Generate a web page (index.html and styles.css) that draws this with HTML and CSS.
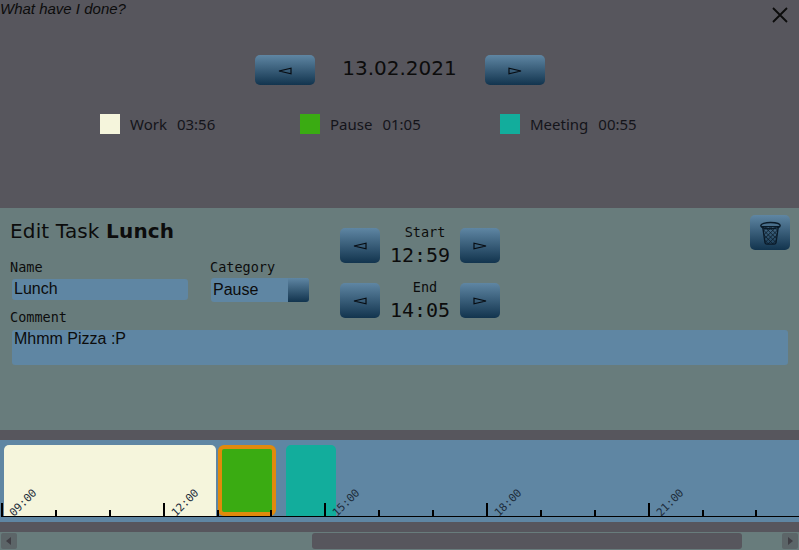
FILE: index.html
```html
<!DOCTYPE html>
<html>
  <head>
    <title>What have I done?</title>
    <link rel="stylesheet" href="styles.css">
  </head>
  <body>
    <div class="overview">
      <div class="app-title">What have I done?</div>
      <button class="close" aria-label="Close">
        <svg width="16" height="16" viewBox="0 0 16 16"><path d="M1 1L15 15M15 1L1 15" stroke="#0c0c0c" stroke-width="1.8" fill="none"/></svg>
      </button>
      <div class="date-row">
        <button class="btn btn-wide" aria-label="Previous day">
          <svg width="14" height="8" viewBox="0 0 14 8"><path d="M1 4L13 1.2V6.8Z" fill="none" stroke="#070c12" stroke-width="1.2"/></svg>
        </button>
        <div class="date">13.02.2021</div>
        <button class="btn btn-wide" aria-label="Next day">
          <svg width="14" height="8" viewBox="0 0 14 8"><path d="M13 4L1 1.2V6.8Z" fill="none" stroke="#070c12" stroke-width="1.2"/></svg>
        </button>
      </div>
      <div class="legend">
        <div class="legend-item"><span class="swatch work"></span><span>Work</span><span>03:56</span></div>
        <div class="legend-item"><span class="swatch pause"></span><span>Pause</span><span>01:05</span></div>
        <div class="legend-item"><span class="swatch meeting"></span><span>Meeting</span><span>00:55</span></div>
      </div>
    </div>

    <div class="editor">
      <div class="editor-left">
        <h2>Edit Task <b>Lunch</b></h2>
        <div class="fields">
          <div class="field name-field">
            <label for="name">Name</label>
            <input type="text" id="name" value="Lunch">
          </div>
          <div class="field">
            <label>Category</label>
            <div class="select"><span>Pause</span><i></i></div>
          </div>
        </div>
      </div>
      <div class="times">
        <div class="time-row">
          <button class="btn" aria-label="Start earlier">
            <svg width="14" height="8" viewBox="0 0 14 8"><path d="M1 4L13 1.2V6.8Z" fill="none" stroke="#070c12" stroke-width="1.2"/></svg>
          </button>
          <div class="time"><span>Start</span><strong>12:59</strong></div>
          <button class="btn" aria-label="Start later">
            <svg width="14" height="8" viewBox="0 0 14 8"><path d="M13 4L1 1.2V6.8Z" fill="none" stroke="#070c12" stroke-width="1.2"/></svg>
          </button>
        </div>
        <div class="time-row">
          <button class="btn" aria-label="End earlier">
            <svg width="14" height="8" viewBox="0 0 14 8"><path d="M1 4L13 1.2V6.8Z" fill="none" stroke="#070c12" stroke-width="1.2"/></svg>
          </button>
          <div class="time"><span>End</span><strong>14:05</strong></div>
          <button class="btn" aria-label="End later">
            <svg width="14" height="8" viewBox="0 0 14 8"><path d="M13 4L1 1.2V6.8Z" fill="none" stroke="#070c12" stroke-width="1.2"/></svg>
          </button>
        </div>
      </div>
      <button class="btn trash" aria-label="Delete">
        <svg width="23" height="24" viewBox="0 0 24 26">
          <defs>
            <pattern id="mesh" width="3.4" height="3.4" patternUnits="userSpaceOnUse" patternTransform="rotate(45)">
              <path d="M0 0H3.4M0 0V3.4" stroke="#0a1a28" stroke-width="1.3"/>
            </pattern>
          </defs>
          <path d="M3.5 6L6 23.5Q6.5 25 8 25H16Q17.5 25 18 23.5L20.5 6Z" fill="url(#mesh)" stroke="#0a1a28" stroke-width="1.4"/>
          <ellipse cx="12" cy="5" rx="10.5" ry="3.4" fill="none" stroke="#0a1a28" stroke-width="1.5"/>
        </svg>
      </button>
      <div class="comment-field">
        <label for="comment">Comment</label>
        <textarea id="comment">Mhmm Pizza :P</textarea>
      </div>
    </div>

    <div class="timeline">
      <div class="task work" style="left: 4px; width: 212px"></div>
      <div class="task pause active" style="left: 218px; width: 58px"></div>
      <div class="task meeting" style="left: 286px; width: 50px"></div>
      <div class="ticks">
        <div class="tick major"><span>09:00</span></div>
        <div class="tick"></div>
        <div class="tick"></div>
        <div class="tick major"><span>12:00</span></div>
        <div class="tick"></div>
        <div class="tick"></div>
        <div class="tick major"><span>15:00</span></div>
        <div class="tick"></div>
        <div class="tick"></div>
        <div class="tick major"><span>18:00</span></div>
        <div class="tick"></div>
        <div class="tick"></div>
        <div class="tick major"><span>21:00</span></div>
        <div class="tick"></div>
        <div class="tick"></div>
      </div>
    </div>

    <div class="scrollbar">
      <div class="arrow"><svg width="6" height="8" viewBox="0 0 6 8"><path d="M5 0V8L0 4Z" fill="#3f3e44"/></svg></div>
      <div class="track"><div class="thumb"></div></div>
      <div class="arrow"><svg width="6" height="8" viewBox="0 0 6 8"><path d="M1 0V8L6 4Z" fill="#3f3e44"/></svg></div>
    </div>
  </body>
</html>
```

FILE: styles.css
```css
/* Reset */
* {
  box-sizing: border-box;
}

body {
  margin: 0;
  height: 550px;
  overflow: hidden;
  background-color: #57565d;
  color: #0c0c0c;
  font-family: "DejaVu Sans", sans-serif;
}

button {
  padding: 0;
  border: none;
  cursor: pointer;
}

/* Shared gradient button */
.btn {
  display: flex;
  justify-content: center;
  align-items: center;
  width: 40px;
  height: 35px;
  border-radius: 5px;
  background: linear-gradient(#5f86a3, #12344e);
}

.btn-wide {
  width: 60px;
  height: 30px;
}

.btn-wide svg {
  margin-top: 1px;
}

/* Top overview */
.overview {
  position: relative;
  height: 208px;
}

.app-title {
  height: 55px;
  font-family: "Liberation Sans", sans-serif;
  font-size: 15px;
  font-style: italic;
  line-height: 18px;
}

.close {
  position: absolute;
  top: 7px;
  right: 11px;
  width: 16px;
  height: 16px;
  background: none;
}

.date-row {
  display: flex;
  justify-content: center;
  align-items: center;
  gap: 27px;
  height: 30px;
}

.date {
  width: 116px;
  margin-top: -4px;
  font-size: 20px;
  text-align: center;
}

.legend {
  display: flex;
  margin-top: 29px;
  padding-left: 100px;
}

.legend-item {
  display: flex;
  align-items: center;
  gap: 10px;
  width: 200px;
  height: 20px;
  font-family: "Noto Sans", sans-serif;
  font-size: 15px;
  color: #14141a;
}

.swatch {
  width: 20px;
  height: 20px;
}

.work {
  background-color: #f5f5dc;
}

.pause {
  background-color: #3aab12;
}

.meeting {
  background-color: #12ad9c;
}

/* Edit panel */
.editor {
  position: relative;
  display: flex;
  flex-wrap: wrap;
  height: 222px;
  background-color: #687c7c;
}

.editor-left {
  width: 340px;
  padding: 11px 0 0 10px;
}

h2 {
  margin: 0;
  font-size: 20px;
  font-weight: normal;
  line-height: 25px;
  letter-spacing: 0.15px;
}

.fields {
  display: flex;
  margin-top: 15px;
}

.field {
  display: flex;
  flex-direction: column;
}

.name-field {
  width: 200px;
}

label {
  display: block;
  font-family: "DejaVu Sans Mono", monospace;
  font-size: 13.5px;
  line-height: 16px;
}

input,
textarea {
  border: none;
  border-radius: 3px;
  outline: none;
  background-color: #5f86a3;
  color: #0c0c0c;
  font-family: "Liberation Sans", sans-serif;
  font-size: 16px;
  padding: 0 2px;
}

input {
  width: 176px;
  height: 21px;
  margin: 4px 0 0 2px;
  padding-bottom: 2px;
}

.select {
  display: flex;
  justify-content: space-between;
  width: 98px;
  height: 24px;
  margin-top: 3px;
  margin-left: 1px;
  border-radius: 3px;
  overflow: hidden;
  background-color: #5f86a3;
  font-family: "Liberation Sans", sans-serif;
  font-size: 16px;
  line-height: 23px;
  padding-left: 2px;
}

.select i {
  width: 21px;
  background: linear-gradient(#5f86a3, #12344e);
}

.times {
  display: flex;
  flex-direction: column;
  gap: 20px;
  width: 160px;
  padding-top: 20px;
}

.time-row {
  display: flex;
  justify-content: space-between;
  height: 35px;
}

.time {
  display: flex;
  flex-direction: column;
  align-items: center;
  margin-top: -4px;
}

.time span {
  margin-bottom: 1px;
  padding-left: 10px;
  font-family: "DejaVu Sans Mono", monospace;
  font-size: 13.5px;
  line-height: 16px;
}

.time strong {
  font-family: "DejaVu Sans Mono", monospace;
  font-size: 20px;
  font-weight: normal;
  line-height: 28px;
}

.trash {
  position: absolute;
  top: 7px;
  right: 9px;
}

.comment-field {
  position: absolute;
  top: 101px;
  left: 10px;
  right: 11px;
}

textarea {
  display: block;
  width: 776px;
  height: 35px;
  margin: 5px 0 0 2px;
  resize: none;
  line-height: 18px;
}

/* Timeline */
.timeline {
  position: relative;
  height: 82px;
  margin-top: 10px;
  background-color: #5f86a3;
}

.task {
  position: absolute;
  top: 5px;
  height: 71px;
  border-radius: 5px 5px 0 0;
}

.task.active {
  border: 4px solid #e08a0c;
  border-radius: 6px;
}

.ticks {
  position: absolute;
  left: 1px;
  right: 0;
  bottom: 5px;
  display: flex;
  align-items: flex-end;
  height: 14px;
  border-bottom: 1px solid #000;
}

.tick {
  position: relative;
  flex: none;
  width: 53.9px;
  height: 6px;
}

.tick::before {
  content: "";
  position: absolute;
  left: 0;
  bottom: 0;
  width: 2px;
  height: 100%;
  background-color: #000;
}

.tick.major {
  height: 13px;
}

.tick span {
  position: absolute;
  left: 15px;
  bottom: -3px;
  font-family: "DejaVu Sans Mono", monospace;
  font-size: 11px;
  line-height: 13px;
  color: #1c2b3a;
  transform: rotate(-45deg);
  transform-origin: left bottom;
  white-space: nowrap;
}

/* Bottom scrollbar */
.scrollbar {
  display: flex;
  justify-content: space-between;
  height: 18px;
  margin-top: 10px;
  padding: 1px;
  background-color: #687c7c;
}

.arrow {
  display: flex;
  justify-content: center;
  align-items: center;
  width: 16px;
  height: 16px;
  border-radius: 2px;
  background-color: #5c6568;
}

.track {
  flex: 1;
  padding: 0 40px 0 295px;
}

.thumb {
  height: 16px;
  border-radius: 3px;
  background-color: #57565d;
}
```
